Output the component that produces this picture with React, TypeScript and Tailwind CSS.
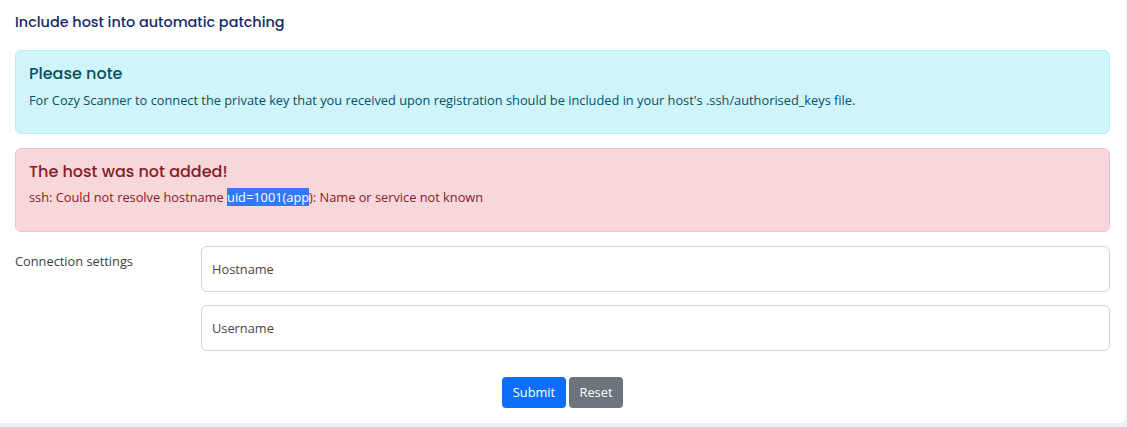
export default function App() {
	return (
		<div className="w-[1127px] h-[427px] bg-[#e9eef7] overflow-hidden font-['Open_Sans',sans-serif]">
			<div className="w-[1126px] h-[423px] bg-white rounded-br-[6px] pl-[15px] pr-[16px] pt-[12px]">
				<h2 className="text-[14.4px] leading-[20px] font-medium text-[#17286a] font-['Poppins','Inter',sans-serif]">
					Include host into automatic patching
				</h2>

				<div className="mt-[18px] rounded-[6px] border border-[#b6effb] bg-[#cff4fc] text-[#055160] px-[13px] pt-[13px] pb-[23px]">
					<h4 className="text-[16px] leading-[20px] font-medium font-['Poppins','Inter',sans-serif]">Please note</h4>
					<p className="mt-[6px] text-[12.8px] leading-[20px]">
						For Cozy Scanner to connect the private key that you received upon registration should be included in your host's .ssh/authorised_keys file.
					</p>
				</div>

				<div className="mt-[14px] rounded-[6px] border border-[#f5c2c7] bg-[#f8d7da] text-[#842029] px-[13px] pt-[13px] pb-[24px]">
					<h4 className="text-[16px] leading-[20px] font-medium font-['Poppins','Inter',sans-serif]">The host was not added!</h4>
					<p className="mt-[5px] text-[12.8px] leading-[20px]">
						ssh: Could not resolve hostname <span className="bg-[#3478f6] text-white">uid=1001(app</span>): Name or service not known
					</p>
				</div>

				<div className="mt-[14px] flex">
					<label className="w-[186px] shrink-0 pt-[5px] text-[12.8px] leading-[20px] text-[#3a3f44]">Connection settings</label>
					<div className="flex-1 flex flex-col gap-[13px]">
						<input
							placeholder="Hostname"
							className="h-[46px] w-full rounded-[6px] border border-[#ced4da] px-[10px] text-[12.8px] text-[#212529] placeholder:text-[#4a4540] outline-none"
						/>
						<input
							placeholder="Username"
							className="h-[46px] w-full rounded-[6px] border border-[#ced4da] px-[10px] text-[12.8px] text-[#212529] placeholder:text-[#4a4540] outline-none"
						/>
					</div>
				</div>

				<div className="mt-[26px] flex justify-center gap-[3px]">
					<button className="h-[31px] w-[64px] rounded-[4px] bg-[#0d6efd] text-white text-[12.8px]">Submit</button>
					<button className="h-[31px] w-[54px] rounded-[4px] bg-[#6c757d] text-white text-[12.8px]">Reset</button>
				</div>
			</div>
		</div>
	);
}
